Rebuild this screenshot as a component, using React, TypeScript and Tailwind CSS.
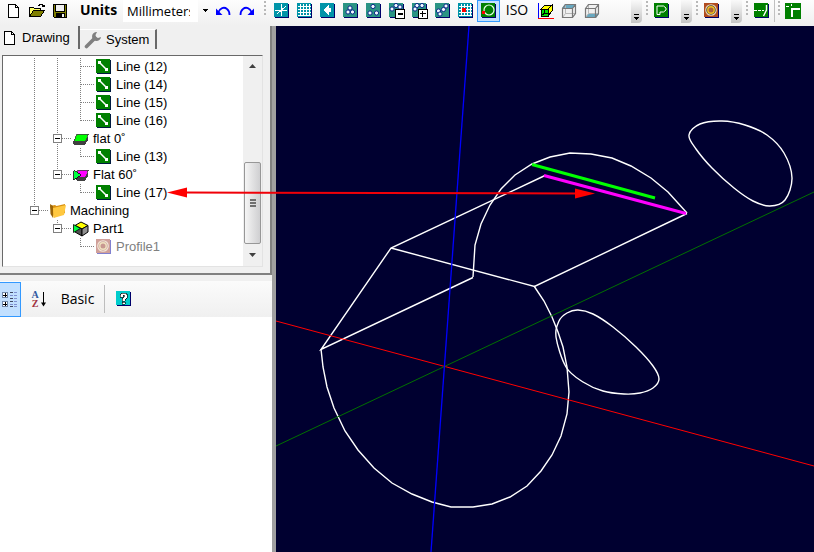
import { useState } from "react";
import type { ReactNode } from "react";

type Point = [number, number];

// ------------------------------
//      TOOLBAR PARTS
// ------------------------------
const ToolButton = ({ label, active, children }: { label: string; active?: boolean; children: ReactNode }) => (
  <button
    type="button"
    aria-label={label}
    className={
      active
        ? "flex h-[22px] w-[23px] shrink-0 items-center justify-center border border-[#3399ff] bg-[#c2e0ff]"
        : "flex h-[22px] w-[23px] shrink-0 items-center justify-center hover:bg-[#d8eaff]"
    }
  >
    {children}
  </button>
);

const Grip = () => (
  <div className="flex w-[3px] shrink-0 flex-col gap-[2px] self-start pt-px">
    <i className="size-[2px] bg-[#b8b8b8]" />
    <i className="size-[2px] bg-[#b8b8b8]" />
    <i className="size-[2px] bg-[#b8b8b8]" />
    <i className="size-[2px] bg-[#b8b8b8]" />
  </div>
);

const Overflow = () => (
  <button
    type="button"
    aria-label="More tools"
    className="flex h-[23px] w-[11px] shrink-0 items-end justify-center self-start rounded-br-sm bg-linear-to-b from-[#fafafa] to-[#c4c4c4] pb-[3px]"
  >
    <svg width="5" height="6" shapeRendering="crispEdges">
      <path d="M0 0h5v1H0zM0 3h5v1H4v1H3v1H2V5H1V4H0z" fill="#000" />
    </svg>
  </button>
);

const Icon = ({ children }: { children: ReactNode }) => (
  <svg width="16" height="16" viewBox="0 0 16 16" shapeRendering="crispEdges" className="shrink-0">
    {children}
  </svg>
);

// Coloured tile with the dark edge at the right and bottom
const Tile = ({ color, children }: { color: string; children: ReactNode }) => (
  <Icon>
    <path d="M1 1h14v14H1z" fill="#00006a" />
    <path d="M0 0h14v14H0z" fill={color} />
    {children}
  </Icon>
);

const Balls = ({ at }: { at: Point[] }) => (
  <g fill="#f4faff" stroke="#0a2a8a" shapeRendering="auto">
    {at.map(([x, y]) => (
      <circle key={`${x}-${y}`} cx={x} cy={y} r="2.1" />
    ))}
  </g>
);

const PageIcon = () => (
  <Icon>
    <path d="M2.500 1.500h7l3 3v9.500h-10z" fill="#fff" stroke="#000" />
    <path d="M9.500 1.500v3h3" fill="none" stroke="#000" />
  </Icon>
);

const OpenIcon = () => (
  <Icon>
    <path d="M0.500 13.500v-9h4l1 1h6v3" fill="#ffff66" stroke="#000" />
    <path d="M0.500 13.500l4-6h11l-4 6z" fill="#808000" stroke="#000" />
    <path d="M9.500 2.500l2-1h2l1 2M12.500 3.500h3v-2" fill="none" stroke="#000" />
  </Icon>
);

const SaveIcon = () => (
  <Icon>
    <path d="M1.500 1.500h13v13h-12l-1-1z" fill="#808000" stroke="#000" />
    <path d="M4 2h8v6H4z" fill="#f0f0f0" />
    <path d="M3 2h1v6h8V2h1v7H3zM4 10h9v4H4z" fill="#000" />
    <path d="M10 11h2v3h-2z" fill="#f0f0f0" />
  </Icon>
);

const CurvedArrow = ({ flip }: { flip?: boolean }) => (
  <svg width="15" height="10" viewBox="0 0 15 10" className={flip ? "-scale-x-100" : ""}>
    <path d="M2.500 6C4 2 8 .5 11 3c2 1.500 2.500 3.500 2.500 6" fill="none" stroke="#0000ff" strokeWidth="1.800" />
    <path d="M0 2.500V9h6.500z" fill="#0000ff" />
  </svg>
);

const GridLines = () => (
  <path d="M3.500 1v12M6.500 1v12M9.500 1v12M12.500 1v12M1 3.500h13M1 6.500h13M1 9.500h13M1 12.500h13" stroke="#fff" fill="none" />
);

const ViewCube = ({ side }: { side: "top" | "bottom" }) => (
  <svg width="16" height="16" viewBox="0 0 16 16" className="shrink-0">
    <path d="M1 5l3-4h11v9l-3 5H1z" fill="#f0f0f0" />
    {side === "top" ? (
      <path d="M1 5l3-4h11l-3 4z" fill="#68a8c0" />
    ) : (
      <path d="M1 15l3-4h11l-3 4z" fill="#68a8c0" />
    )}
    <path d="M4.500 1.500v9h10M4.500 10.500l-3 4" fill="none" stroke="#b8b8b8" />
    <path d="M1.500 5.500h10v9h-10zM1.500 5.500l3-4h10v9l-3 4M11.500 5.500l3-4" fill="none" stroke="#787878" strokeWidth="1.200" />
  </svg>
);

const ProfileIcon = ({ faded }: { faded?: boolean }) => (
  <svg width="16" height="16" viewBox="0 0 16 16" className="shrink-0">
    <path d="M1 1h14v14H1z" fill={faded ? "#8080d0" : "#00006a"} />
    <path d="M0 0h14v14H0z" fill={faded ? "#d0a09a" : "#b04c20"} />
    <circle cx="7" cy="7" r="5.300" fill={faded ? "#d0a8a0" : "#4a4038"} stroke={faded ? "#f2e6d8" : "#e8d8b8"} strokeWidth="1.100" />
    <circle cx="7" cy="7" r="3.200" fill={faded ? "#c89890" : "#a8603a"} stroke={faded ? "#efe2c0" : "#f0c020"} strokeWidth="1.400" />
  </svg>
);

// ------------------------------
//      TREE
// ------------------------------
const LineIcon = () => (
  <Icon>
    <path d="M1 1h14v14H1z" fill="#001a40" />
    <path d="M0 0h14v14H0z" fill="#008000" />
    <path d="M3.500 3.500l7 7" stroke="#fff" strokeWidth="1.500" shapeRendering="auto" />
    <path d="M2 2h3v3H2zM9 9h3v3H9z" fill="#fff" />
  </Icon>
);

const FlatIcon = () => (
  <Icon>
    <path d="M0 11l3-5h12v3l-3 5H1z" fill="#404040" />
    <path d="M1 10l3-7h11.500l-3 7z" fill="#00ff00" stroke="#404040" strokeWidth=".8" />
  </Icon>
);

const TiltedFlatIcon = () => (
  <Icon>
    <path d="M2 12l3-6h10v3l-3 5H4z" fill="#404040" />
    <path d="M4 10l1-7h10.500l-3 7z" fill="#ff00ff" stroke="#404040" strokeWidth=".8" />
    <path d="M.5 3.500v9l7-4.500z" fill="#00ff40" stroke="#000" strokeWidth=".8" />
  </Icon>
);

const FolderIcon = () => (
  <svg width="16" height="16" viewBox="0 0 16 16" className="shrink-0">
    <path d="M0 3l5-1 1.500 1L15 1v9L4 14.500z" fill="#d89010" />
    <path d="M0 1l3 2v12l-2.500-4z" fill="#9a6408" />
    <path d="M3 5L16 2l-2 10-10.500 3z" fill="#ffc840" />
  </svg>
);

const PartIcon = () => (
  <svg width="16" height="16" viewBox="0 0 16 16" className="shrink-0">
    <path d="M2 4.500l6-3.500 7 3.500L9 8z" fill="#ffff00" stroke="#000" />
    <path d="M2 4.500L9 8v7l-7-4z" fill="#505050" stroke="#000" />
    <path d="M9 8l6-3.500V11l-6 4z" fill="#909090" stroke="#000" />
    <path d="M.5 3.500v8l7-4z" fill="#00ff40" stroke="#000" strokeWidth=".8" />
  </svg>
);

type Guide = "line" | "blank" | "tee" | "end" | "open" | "openLast";

const GuideCell = ({ kind }: { kind: Guide }) => {
  const last = kind !== "line" && kind !== "blank";
  const down = kind === "line" || kind === "tee" || kind === "open";
  return (
    <svg
      width={last ? 27 : 23}
      height="18"
      shapeRendering="crispEdges"
      className="shrink-0"
      stroke="#808080"
      strokeDasharray="1 1"
    >
      {kind !== "blank" && <path d={down ? "M11.500 0v18" : "M11.500 0v9"} />}
      {last && <path d="M12 8.500h14" />}
      {(kind === "open" || kind === "openLast") && (
        <g strokeDasharray="none">
          <rect x="7.500" y="4.500" width="8" height="8" fill="#fff" stroke="#808080" />
          <path d="M9 8.500h5" stroke="#000" />
        </g>
      )}
    </svg>
  );
};

const rows: { guides: Guide[]; icon: ReactNode; text: string; muted?: boolean }[] = [
  { guides: ["line", "line", "tee"], icon: <LineIcon />, text: "Line (12)" },
  { guides: ["line", "line", "tee"], icon: <LineIcon />, text: "Line (14)" },
  { guides: ["line", "line", "tee"], icon: <LineIcon />, text: "Line (15)" },
  { guides: ["line", "line", "end"], icon: <LineIcon />, text: "Line (16)" },
  { guides: ["line", "open"], icon: <FlatIcon />, text: "flat 0˚" },
  { guides: ["line", "line", "end"], icon: <LineIcon />, text: "Line (13)" },
  { guides: ["line", "openLast"], icon: <TiltedFlatIcon />, text: "Flat 60˚" },
  { guides: ["line", "blank", "end"], icon: <LineIcon />, text: "Line (17)" },
  { guides: ["openLast"], icon: <FolderIcon />, text: "Machining" },
  { guides: ["blank", "openLast"], icon: <PartIcon />, text: "Part1" },
  { guides: ["blank", "blank", "end"], icon: <ProfileIcon faded />, text: "Profile1", muted: true },
];

const Tree = () => (
  <div className="mt-[6px] mr-[7px] ml-[2px] flex h-[212px] border border-[#e3e3e3] border-t-[#696969] border-l-[#696969] bg-white">
    <ul className="flex-1 overflow-hidden pt-[2px] pl-5">
      {rows.map((row) => (
        <li key={row.text} className="flex h-[18px] items-center">
          {row.guides.map((kind, i) => (
            <GuideCell key={i} kind={kind} />
          ))}
          {row.icon}
          <span className={row.muted ? "pl-1 text-[#808080]" : "pl-1"}>{row.text}</span>
        </li>
      ))}
    </ul>
    {/* SCROLLBAR */}
    <div className="flex w-[19px] flex-col items-center bg-[#f0f0f0]">
      <button type="button" aria-label="Scroll up" className="flex h-5 w-full items-center justify-center">
        <svg width="7" height="4">
          <path d="M0 4l3.500-4L7 4z" fill="#404040" />
        </svg>
      </button>
      <div className="flex-1" />
      <div className="flex h-[82px] w-[17px] flex-col items-center justify-center gap-px rounded-xs border border-[#979797] bg-linear-to-r from-[#f5f5f5] to-[#cfcfd1]">
        <i className="h-[2px] w-[6px] bg-[#707070]" />
        <i className="h-[2px] w-[6px] bg-[#707070]" />
        <i className="h-[2px] w-[6px] bg-[#707070]" />
      </div>
      <button type="button" aria-label="Scroll down" className="flex h-[22px] w-full items-center justify-center">
        <svg width="7" height="4">
          <path d="M0 0l3.500 4L7 0z" fill="#404040" />
        </svg>
      </button>
    </div>
  </div>
);

// ------------------------------
//      3D VIEW
// ------------------------------
const lowerArc =
  "534,286 544,301 552,317 558,332 563,347 567,367 569,392 567,414 561,436 552,455 541,471 527,486 510,497 492,504 473,507 451,507 432,502 412,494 392,483 374,468 358,450 345,431 334,408 327,387 323,367 321,349";
const upperArc =
  "473,277 475,245 481,224 490,205 501,189 515,175 532,164 550,157 570,153 591,154 612,158 631,166 651,178 668,192 687,213";

const loops: Point[][] = [
  [[689, 135], [700, 124], [722, 121], [745, 125], [767, 135], [784, 153], [792, 178], [785, 200], [770, 206], [753, 201], [734, 188], [712, 168], [696, 149]],
  [[556, 337], [559, 321], [567, 313], [578, 310], [593, 314], [613, 327], [636, 347], [653, 366], [659, 379], [653, 388], [640, 393], [624, 394], [603, 391], [583, 382], [566, 367]],
];

// Closed Catmull-Rom curve through the points
const smooth = (pts: Point[]) => {
  const n = pts.length;
  const segments = pts.map((p, i) => {
    const before = pts[(i + n - 1) % n];
    const next = pts[(i + 1) % n];
    const after = pts[(i + 2) % n];
    const c1 = [p[0] + (next[0] - before[0]) / 6, p[1] + (next[1] - before[1]) / 6];
    const c2 = [next[0] - (after[0] - p[0]) / 6, next[1] - (after[1] - p[1]) / 6];
    return `C${c1} ${c2} ${next}`;
  });
  return `M${pts[0]}${segments.join("")}Z`;
};

const Viewport = () => (
  <main className="relative min-w-0 flex-1 bg-[#000030]">
    <svg className="absolute inset-0 size-full" viewBox="276 26 538 526" preserveAspectRatio="xMidYMid slice" fill="none">
      <g stroke="#fff" strokeWidth="1.400">
        <polyline points={lowerArc} />
        <polyline points={upperArc} />
        <path d="M545 175.500L391 248L321 349.500L473 277.500M391 248L534.500 286.500L687 213.500" />
        {loops.map((pts, i) => (
          <path key={i} d={smooth(pts)} />
        ))}
      </g>
      <path d="M276 321L814 466" stroke="#ff0000" />
      <path d="M276 446L814 192" stroke="#007000" />
      <path d="M469 26L431 552" stroke="#0000ff" strokeWidth="1.300" />
      <path d="M532 164.500L655 198" stroke="#00ff00" strokeWidth="3" />
      <path d="M544 175.500L686 213.500" stroke="#ff00ff" strokeWidth="3" />
    </svg>
  </main>
);

export default function App() {
  const [units, setUnits] = useState("Millimeters");

  return (
    <div className="flex min-h-screen flex-col overflow-hidden bg-[#f0f0f0] font-['Liberation_Sans',Arial,sans-serif] text-[13px] text-black">
      {/* TOP TOOLBAR */}
      <header className="flex h-[26px] items-start overflow-hidden bg-linear-to-b from-[#fdfdfd] to-[#f0f0f0] pl-[2px] font-['Open_Sans',sans-serif] text-sm">
        <ToolButton label="New"><PageIcon /></ToolButton>
        <ToolButton label="Open"><OpenIcon /></ToolButton>
        <ToolButton label="Save"><SaveIcon /></ToolButton>
        <label htmlFor="units" className="w-[52px] shrink-0 pl-[9px] leading-5 font-bold">Units</label>
        <div className="flex h-[22px] w-[75px] shrink-0 overflow-hidden bg-white pr-2 pl-1">
          <select
            id="units"
            value={units}
            onChange={(e) => setUnits(e.target.value)}
            className="w-full appearance-none overflow-hidden bg-white text-[13px] leading-5 outline-none"
          >
            <option>Millimeters</option>
            <option>Inches</option>
          </select>
        </div>
        <div className="flex h-5 w-[14px] shrink-0 items-center justify-center">
          <svg width="5" height="3" shapeRendering="crispEdges">
            <path d="M0 0h5v1H4v1H3v1H2V2H1V1H0z" fill="#000" />
          </svg>
        </div>
        <ToolButton label="Undo"><CurvedArrow /></ToolButton>
        <ToolButton label="Redo"><CurvedArrow flip /></ToolButton>
        <div className="w-[6px] shrink-0" />
        <Grip />
        <div className="w-[3px] shrink-0" />

        <ToolButton label="Axes">
          <Tile color="#0094a8">
            <path d="M7.500 1v12M1 7.500h12M3 11l9-8" stroke="#fff" fill="none" />
          </Tile>
        </ToolButton>
        <ToolButton label="Grid">
          <Tile color="#0094a8"><GridLines /></Tile>
        </ToolButton>
        <ToolButton label="Previous view">
          <Tile color="#0094a8">
            <path d="M3 7l5-5 1 1v2h2v4H9v2l-1 1z" fill="#fff" />
          </Tile>
        </ToolButton>
        <ToolButton label="Zoom all">
          <Tile color="#2a9484"><Balls at={[[7, 5], [5, 9], [9.5, 9]]} /></Tile>
        </ToolButton>
        <ToolButton label="Zoom selection">
          <Tile color="#2a9484"><Balls at={[[7, 3.5], [4, 10], [10.5, 10]]} /></Tile>
        </ToolButton>
        <ToolButton label="Zoom out">
          <Tile color="#2a9484">
            <Balls at={[[7, 2.5], [3, 6], [11, 4]]} />
            <path d="M6.500 6.500h9v9h-9z" fill="#fff" stroke="#000" />
            <path d="M9 10h5v2H9z" fill="#000" />
          </Tile>
        </ToolButton>
        <ToolButton label="Zoom in">
          <Tile color="#2a9484">
            <Balls at={[[5, 2.5], [3, 6], [10, 2.5]]} />
            <path d="M6.500 6.500h9v9h-9z" fill="#fff" stroke="#000" />
            <path d="M8 10h6v1H8zM10 8h1v6h-1z" fill="#000" />
          </Tile>
        </ToolButton>
        <ToolButton label="Pan">
          <Tile color="#2a9484"><Balls at={[[11, 3], [8.5, 6.5], [3.5, 8], [5, 11]]} /></Tile>
        </ToolButton>
        <ToolButton label="Snap to grid">
          <Tile color="#0094a8">
            <GridLines />
            <path d="M4 5h4v4H4z" fill="#ff0000" />
          </Tile>
        </ToolButton>
        <ToolButton label="Rotate view" active>
          <Tile color="#008000">
            <circle cx="8" cy="7" r="5" fill="none" stroke="#e8ffe8" strokeWidth="1.200" shapeRendering="auto" />
            <path d="M1 8h3v3H1z" fill="#ff0000" />
          </Tile>
        </ToolButton>
        <button type="button" className="h-5 w-[34px] shrink-0 text-center leading-5">ISO</button>
        <ToolButton label="Isometric view">
          <Icon>
            <path d="M.5 0v15.500H16" fill="none" stroke="#0000ff" />
            <path d="M0 15.500h16" stroke="#ff0000" />
            <path d="M3 6l4-4h7l-4 4z" fill="#ffff00" stroke="#000" />
            <path d="M3 6h7v7H3z" fill="#00e000" stroke="#000" />
            <path d="M10 6l4-4v6l-4 5z" fill="#ffff00" stroke="#000" />
            <path d="M6.500 6v4M3 13l4-3h3" fill="none" stroke="#000" />
          </Icon>
        </ToolButton>
        <ToolButton label="Top view"><ViewCube side="top" /></ToolButton>
        <ToolButton label="Bottom view"><ViewCube side="bottom" /></ToolButton>
        <div className="w-7 shrink-0" />
        <Overflow />
        <div className="w-1 shrink-0" />
        <Grip />
        <div className="w-px shrink-0" />
        <ToolButton label="Profile">
          <Tile color="#008000">
            <path d="M3 11.500V3h6.500l2.500 2v2l-2.500 2H6v2.500z" fill="none" stroke="#fff" shapeRendering="auto" />
          </Tile>
        </ToolButton>
        <div className="w-2 shrink-0" />
        <Overflow />
        <div className="w-1 shrink-0" />
        <Grip />
        <div className="w-px shrink-0" />
        <ToolButton label="Machine profile"><ProfileIcon /></ToolButton>
        <div className="w-2 shrink-0" />
        <Overflow />
        <div className="w-1 shrink-0" />
        <Grip />
        <div className="w-px shrink-0" />
        <ToolButton label="Trim">
          <Tile color="#008000">
            <path d="M0 7.500h10" stroke="#fff" strokeDasharray="3 1" />
            <path d="M12.500 2v5l-3 6" stroke="#fff" fill="none" strokeWidth="1.400" shapeRendering="auto" />
          </Tile>
        </ToolButton>
        <div className="mx-px h-[22px] w-px shrink-0 bg-[#c0c0c0]" />
        <div className="w-[2px] shrink-0" />
        <Grip />
        <ToolButton label="Extend">
          <Icon>
            <path d="M0 0h16v16H0z" fill="#008000" />
            <path d="M1 3.500h3M6.500 1v2" stroke="#fff" />
            <path d="M6 5h9v2H8v7H6z" fill="#fff" />
          </Icon>
        </ToolButton>
      </header>

      <div className="relative flex flex-1">
        {/* SIDE PANEL */}
        <aside className="flex w-[272px] shrink-0 flex-col">
          <section className="h-[249px] border-r-2 border-b-2 border-[#808080]">
            <div role="tablist" className="flex h-[23px] items-end">
              <button
                type="button"
                role="tab"
                aria-selected="true"
                className="flex h-[23px] w-20 items-center gap-1 border-r-2 border-[#696969] pl-[2px]"
              >
                <PageIcon />
                Drawing
              </button>
              <button
                type="button"
                role="tab"
                aria-selected="false"
                className="flex h-5 w-[77px] items-center gap-1 border-t border-r-2 border-t-white border-r-[#696969] pl-1"
              >
                <svg width="18" height="18" viewBox="0 0 18 18">
                  <path d="M2.500 15.500L11 7" stroke="#808080" strokeWidth="3.600" strokeLinecap="round" />
                  <path d="M13 1a4.500 4.500 0 1 0 4 5l-3 1-2-1-.5-2z" fill="#808080" />
                </svg>
                System
              </button>
            </div>
            <Tree />
          </section>

          {/* PROPERTY TOOLBAR */}
          <div className="mt-[6px] flex h-9 items-center bg-linear-to-b from-[#fbfbfb] to-[#f0f0f0] font-['Open_Sans',sans-serif] text-sm">
            <button
              type="button"
              aria-label="Categorized"
              className="flex h-[35px] w-[21px] items-center justify-center border border-l-0 border-[#3399ff] bg-[#c2e0ff]"
            >
              <svg width="18" height="18" shapeRendering="crispEdges">
                <path d="M1.500 2.500h5v5h-5zM1.500 11.500h5v5h-5z" fill="#fff" stroke="#7088a8" />
                <path d="M2 5h4M4 3v4M2 14h4M4 12v4" stroke="#000" />
                <path d="M9 2.500h3M9 8.500h3M9 11.500h3M9 16.500h3" stroke="#404860" />
                <path d="M9 5.500h8M13 2.500h4M13 8.500h4M9 14h8M13 11.500h4M13 16.500h4" stroke="#8090d0" strokeDasharray="3 1" />
              </svg>
            </button>
            <button type="button" aria-label="Alphabetical" className="ml-2 flex h-8 w-5 items-center justify-center">
              <span className="flex flex-col font-['Liberation_Serif',serif] text-[10px] leading-[9px] font-bold">
                <span className="text-[#3058a0]">A</span>
                <span className="text-[#a03040]">Z</span>
              </span>
              <svg width="7" height="15" className="ml-px">
                <path d="M3.500 0v13" stroke="#000" />
                <path d="M1 10.500h5l-2.500 4z" fill="#000" />
              </svg>
            </button>
            <button type="button" className="ml-[6px] w-[45px] text-center">Basic</button>
            <div className="ml-1 h-7 w-px bg-[#bdbdbd]" />
            <button type="button" aria-label="Help" className="ml-[11px]">
              <Tile color="#00cccc">
                <path d="M4 3h1V2h5v1h1v4h-1v1H9v2H6V7h1V6h1V4H7v2H4zM6 11h3v2H6z" fill="#fff" stroke="#000" strokeWidth=".6" />
              </Tile>
            </button>
          </div>
          <div className="flex-1 bg-white" />
        </aside>
        <div className="w-1 shrink-0 bg-[#a0a0a0]" />
        <Viewport />

        {/* Callout that ties the tree row to its line in the view */}
        <svg width="430" height="12" className="pointer-events-none absolute top-[161px] left-[167px]">
          <path d="M18 5.500L410 6.500" stroke="#f00008" strokeWidth="2" />
          <path d="M0 5.500l20-5v10zM428 6.500l-20-5v10z" fill="#ff0000" />
        </svg>
      </div>
    </div>
  );
}
